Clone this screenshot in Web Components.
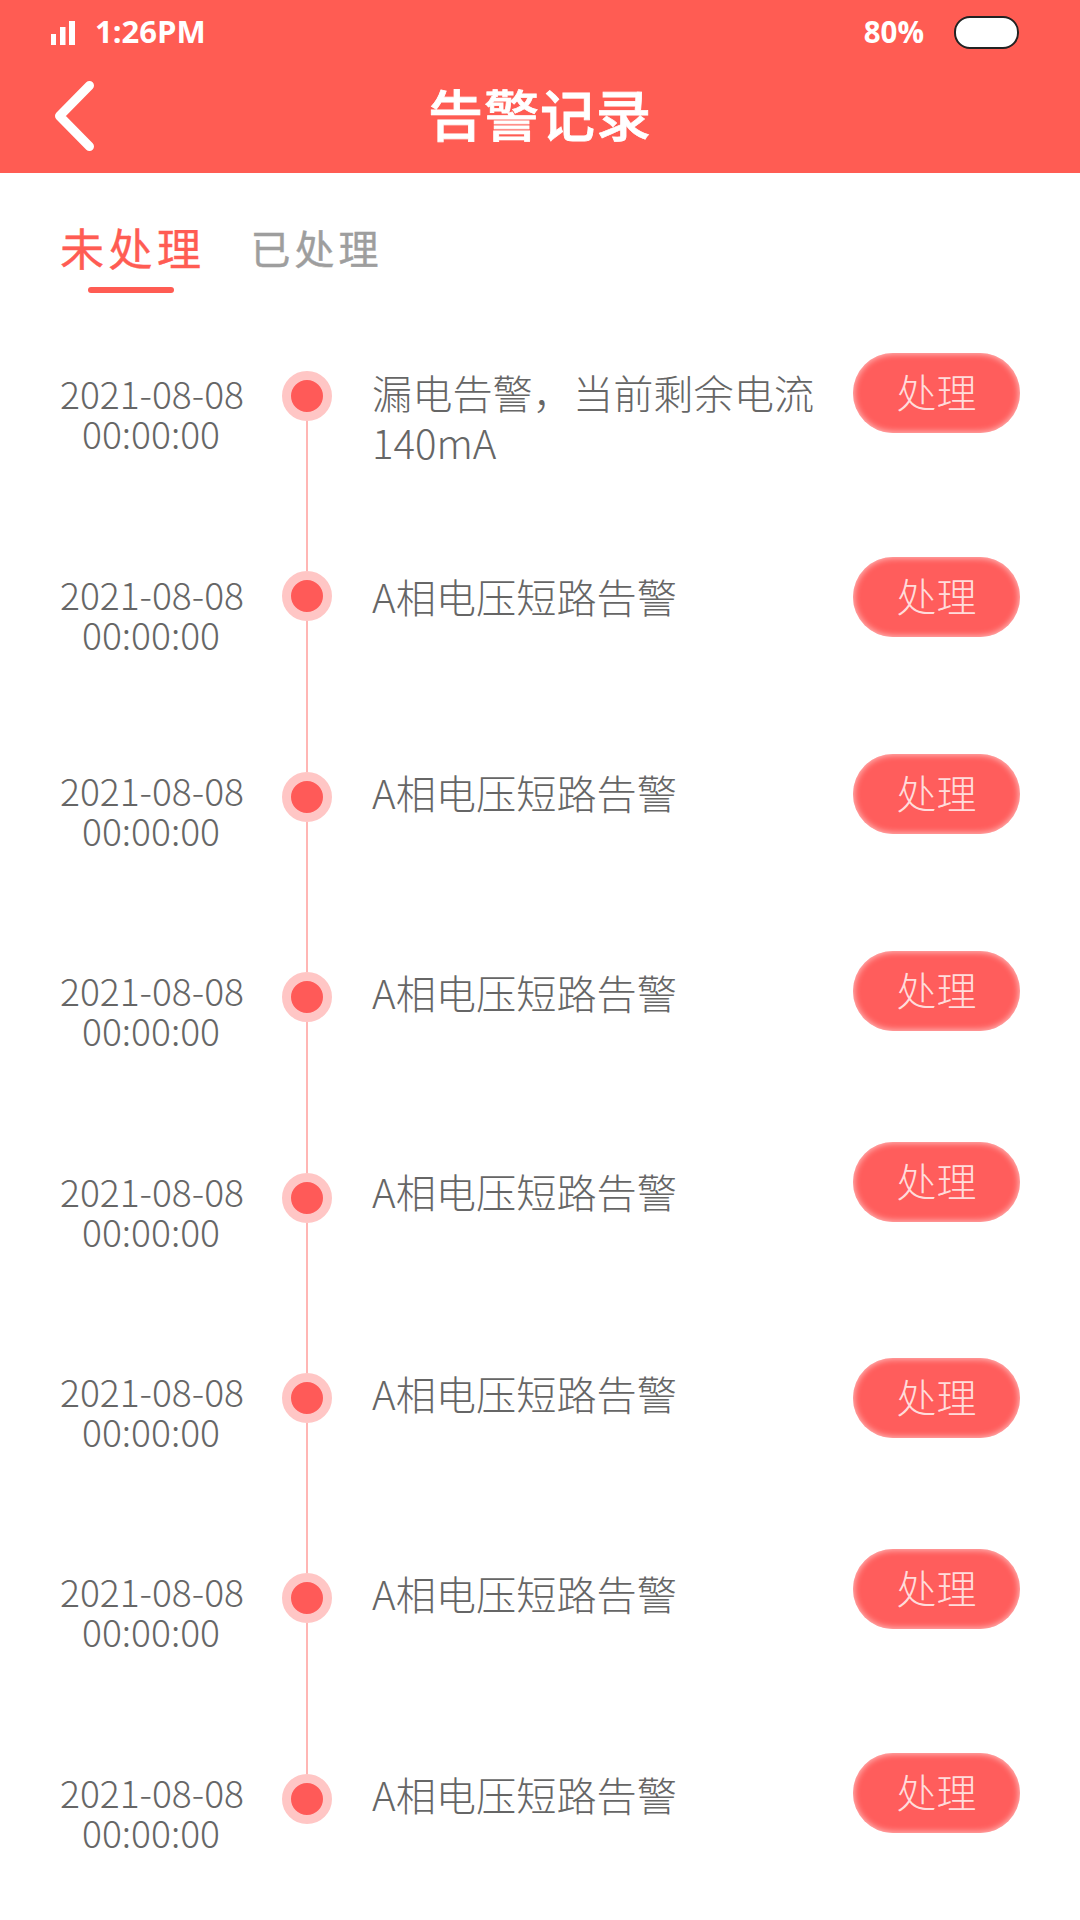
<!DOCTYPE html>
<html lang="zh-CN">
<head>
    <meta charset="UTF-8">
    <title>告警记录</title>
    <style>
        html, body { margin: 0; background: #fff; }
        body { font-family: "Noto Sans CJK SC", "Noto Sans", sans-serif; }
    </style>
</head>
<body>
    <top-bar title="告警记录"></top-bar>
    <tab-bar>
        <tab-item active>未处理</tab-item>
        <tab-item>已处理</tab-item>
    </tab-bar>
    <alarm-list>
        <alarm-row style="--date:2px;--msg:-4px;--btn:-3px"><span slot="time">2021-08-08<br>00:00:00</span>漏电告警，当前剩余电流140mA<alarm-btn slot="action">处理</alarm-btn></alarm-row>
        <alarm-row style="--date:3px;--msg:0px;--btn:1px"><span slot="time">2021-08-08<br>00:00:00</span>A相电压短路告警<alarm-btn slot="action">处理</alarm-btn></alarm-row>
        <alarm-row style="--date:-2px;--msg:-5px;--btn:-3px"><span slot="time">2021-08-08<br>00:00:00</span>A相电压短路告警<alarm-btn slot="action">处理</alarm-btn></alarm-row>
        <alarm-row style="--date:-2px;--msg:-5px;--btn:-6px"><span slot="time">2021-08-08<br>00:00:00</span>A相电压短路告警<alarm-btn slot="action">处理</alarm-btn></alarm-row>
        <alarm-row style="--date:-2px;--msg:-7px;--btn:-16px"><span slot="time">2021-08-08<br>00:00:00</span>A相电压短路告警<alarm-btn slot="action">处理</alarm-btn></alarm-row>
        <alarm-row style="--date:-2px;--msg:-5px;--btn:0px"><span slot="time">2021-08-08<br>00:00:00</span>A相电压短路告警<alarm-btn slot="action">处理</alarm-btn></alarm-row>
        <alarm-row style="--date:-2px;--msg:-5px;--btn:-9px"><span slot="time">2021-08-08<br>00:00:00</span>A相电压短路告警<alarm-btn slot="action">处理</alarm-btn></alarm-row>
        <alarm-row last style="--date:-2px;--msg:-5px;--btn:-6px"><span slot="time">2021-08-08<br>00:00:00</span>A相电压短路告警<alarm-btn slot="action">处理</alarm-btn></alarm-row>
    </alarm-list>

    <template id="topBarHtml">
        <style>
            :host { display: block; height: 173px; background: #ff5c53; color: #fff; }
            .status { display: flex; align-items: center; height: 65px; padding: 0 61px 0 51px; font: 700 31px "Open Sans", sans-serif; }
            .status svg { margin-right: 20px; }
            .status span { margin-top: -3px; }
            .status .pct { margin-left: auto; font-size: 29.5px; }
            .battery { width: 61px; height: 29px; margin-left: 30px; background: #fff; border: 2px solid #222; border-radius: 16px; }
            .nav { display: flex; align-items: center; justify-content: center; position: relative; height: 108px; }
            .nav svg { position: absolute; left: 50px; top: 15px; }
            h1 { margin: -14px 0 0; font-size: 55px; font-weight: 500; letter-spacing: 1px; line-height: 70px; -webkit-text-stroke: .8px #fff; }
        </style>
        <div class="status">
            <svg width="24" height="24" viewBox="0 0 24 24" fill="#fff"><rect x="0" y="13" width="5" height="11"/><rect x="9" y="6" width="5.5" height="18"/><rect x="18" y="0" width="6" height="24"/></svg>
            <span>1:26PM</span>
            <span class="pct">80%</span>
            <div class="battery"></div>
        </div>
        <div class="nav">
            <svg width="46" height="72" viewBox="0 0 46 72" fill="none" stroke="#fff" stroke-width="9" stroke-linecap="round" stroke-linejoin="round"><path d="M39.5 5.5 L9.5 36 L39.5 66.5"/></svg>
            <h1></h1>
        </div>
    </template>

    <template id="tabBarHtml">
        <style>
            :host { display: flex; align-items: flex-start; gap: 45px; padding: 44px 0 0 60px; height: 79px; }
        </style>
        <slot></slot>
    </template>

    <template id="tabItemHtml">
        <style>
            :host { display: block; position: relative; font-size: 40px; font-weight: 400; -webkit-text-stroke: .4px currentColor; line-height: 60px; letter-spacing: 4px; color: #9e9e9e; }
            :host([active]) { font-size: 44px; letter-spacing: 4.5px; color: #ff5c53; }
            :host([active])::after { content: ""; position: absolute; left: 28px; width: 86px; top: 70px; height: 6px; border-radius: 3px; background: #ff5c53; }
        </style>
        <slot></slot>
    </template>

    <template id="alarmListHtml">
        <style>
            :host { display: block; padding-top: 75px; }
        </style>
        <slot></slot>
    </template>

    <template id="alarmRowHtml">
        <style>
            :host { display: grid; grid-template-columns: 222px 50px 521px 167px; height: 200.4px; padding-left: 60px; color: #666; font-weight: 300; }
            .time { padding-right: 40px; font-size: 37.2px; line-height: 40px; text-align: center; margin-top: var(--date, 0px); white-space: nowrap; }
            .axis { display: flex; flex-direction: column; align-items: center; }
            .dot { flex: none; box-sizing: border-box; width: 50px; height: 50px; border: 9px solid #ffc6c5; border-radius: 50%; background: #ff5a58; }
            .line { flex: 1; width: 2px; background: #ffb6b4; }
            :host([last]) .line { display: none; }
            .msg { font-size: 40.2px; line-height: 50px; padding: 0 30px 0 40px; margin-top: var(--msg, 0px); }
            .action { margin-top: var(--btn, 0px); }
        </style>
        <div class="time"><slot name="time"></slot></div>
        <div class="axis"><div class="dot"></div><div class="line"></div></div>
        <div class="msg"><slot></slot></div>
        <div class="action"><slot name="action"></slot></div>
    </template>

    <template id="alarmBtnHtml">
        <style>
            :host { display: flex; align-items: center; justify-content: center; box-sizing: border-box; width: 167px; height: 80px; padding-bottom: 4px; margin-top: -15px; border-radius: 40px; background: #ff5d5c; box-shadow: inset 0 0 6px 1px rgba(255,255,255,.6); color: #ffdcdb; font-size: 40px; font-weight: 300; }
        </style>
        <slot></slot>
    </template>

    <script>
        // 템플릿 복제해서 shadowRoot 에 붙이는 공통 클래스
        class Base extends HTMLElement {
            connectedCallback() {
                if (this.shadowRoot) return;
                this.attachShadow({ mode: 'open' });
                this.shadowRoot.append(document.getElementById(this.constructor.tpl).content.cloneNode(true));
                this.ready && this.ready();
            }
        }
        class TopBar extends Base {
            static tpl = 'topBarHtml';
            ready() { this.shadowRoot.querySelector('h1').textContent = this.getAttribute('title'); }
        }
        class TabBar extends Base { static tpl = 'tabBarHtml'; }
        class TabItem extends Base { static tpl = 'tabItemHtml'; }
        class AlarmList extends Base { static tpl = 'alarmListHtml'; }
        class AlarmRow extends Base { static tpl = 'alarmRowHtml'; }
        class AlarmBtn extends Base { static tpl = 'alarmBtnHtml'; }

        customElements.define('top-bar', TopBar);
        customElements.define('tab-bar', TabBar);
        customElements.define('tab-item', TabItem);
        customElements.define('alarm-list', AlarmList);
        customElements.define('alarm-row', AlarmRow);
        customElements.define('alarm-btn', AlarmBtn);
    </script>
</body>
</html>
